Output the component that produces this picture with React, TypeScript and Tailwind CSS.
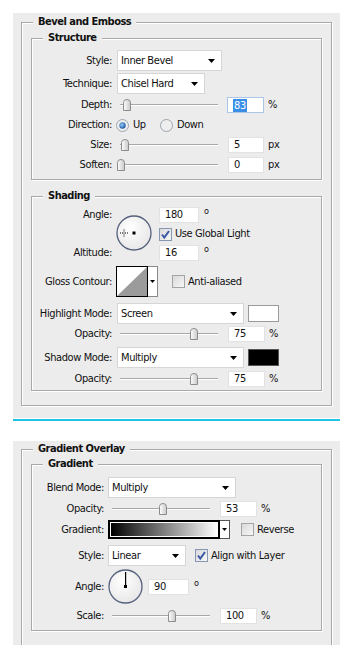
import React from "react";

const FS = "border border-[#a9a9a9] shadow-[1px_1px_0_#ffffff,inset_1px_1px_0_#ffffff] m-0 min-w-0";

function Legend({ children, ml }: { children: React.ReactNode; ml: string }) {
  return <legend className={`${ml} px-[5px] font-bold leading-[14px] tracking-[-0.5px] bg-[#ececec]`}>{children}</legend>;
}

function Arrow() {
  return (
    <svg width="7" height="4" viewBox="0 0 7 4" className="block">
      <path d="M0 0H7L3.5 4Z" fill="#000" />
    </svg>
  );
}

function Select({ w, text }: { w: string; text: string }) {
  return (
    <div className={`${w} h-[21px] bg-white border border-[#d6d6d6] flex items-center pl-[3px] pr-[6px]`}>
      <span className="flex-1">{text}</span>
      <Arrow />
    </div>
  );
}

function Thumb() {
  return (
    <svg width="8" height="12" viewBox="0 0 8 12" className="block">
      <defs>
        <linearGradient id="tg" x1="0" y1="0" x2="1" y2="0">
          <stop offset="0" stopColor="#ffffff" />
          <stop offset="1" stopColor="#c8c8c8" />
        </linearGradient>
      </defs>
      <path d="M0.5 3.5Q0.5 0.5 4 0.5Q7.5 0.5 7.5 3.5V11.5H0.5Z" fill="url(#tg)" stroke="#8c8c8c" />
    </svg>
  );
}

function Slider({ w, pos }: { w: string; pos: number }) {
  return (
    <div className={`${w} h-[14px] relative`}>
      <div className="absolute left-0 right-0 top-[6px] h-[2px] border-t border-[#a8a8a8] border-b border-b-white" />
      <div className="absolute top-[1px]" style={{ left: pos }}>
        <Thumb />
      </div>
    </div>
  );
}

function Input({ w, value, focus }: { w: string; value: string; focus?: boolean }) {
  return (
    <div
      className={`${w} h-[16px] bg-white border ${focus ? "border-[#a9c6e6]" : "border-[#e2e2e2]"} flex items-center pl-[5px]`}
    >
      {focus ? <span className="bg-[#3a8ee6] text-white px-[1px] leading-[13px]">{value}</span> : <span>{value}</span>}
    </div>
  );
}

function Check({ checked }: { checked?: boolean }) {
  return (
    <svg width="13" height="13" viewBox="0 0 13 13" className="block">
      <defs>
        <linearGradient id="cg" x1="0" y1="0" x2="1" y2="1">
          <stop offset="0" stopColor="#d8d8d8" />
          <stop offset="1" stopColor="#f8f8f8" />
        </linearGradient>
      </defs>
      <rect x="0.5" y="0.5" width="12" height="12" fill="url(#cg)" stroke={checked ? "#8797b3" : "#a4a4a4"} />
      {checked && <path d="M3 6.5L5.3 9.5L10 3" fill="none" stroke="#3a57a6" strokeWidth="2" />}
    </svg>
  );
}

function Radio({ on }: { on?: boolean }) {
  return (
    <svg width="13" height="13" viewBox="0 0 13 13" className="block">
      <defs>
        <radialGradient id="rg" cx="0.4" cy="0.4" r="0.6">
          <stop offset="0" stopColor="#9ccbf5" />
          <stop offset="1" stopColor="#1b59a8" />
        </radialGradient>
      </defs>
      <circle cx="6.5" cy="6.5" r="6" fill="#eeeeee" stroke="#9ba3ad" />
      {on && <circle cx="6.5" cy="6.5" r="3.2" fill="url(#rg)" />}
    </svg>
  );
}

function Row({ lw, label, children, h = "h-[20px]", cls = "" }: { lw: string; label: string; children?: React.ReactNode; h?: string; cls?: string }) {
  return (
    <div className={`flex items-center ${h} ${cls}`}>
      <div className={`${lw} text-right shrink-0`}>{label}</div>
      {children}
    </div>
  );
}

function Dial({ size, mode }: { size: number; mode: "light" | "up" }) {
  const c = size / 2;
  return (
    <svg width={size} height={size} viewBox={`0 0 ${size} ${size}`} className="block">
      <defs>
        <radialGradient id={`dg${mode}`} cx="0.4" cy="0.35" r="0.7">
          <stop offset="0" stopColor="#ffffff" />
          <stop offset="1" stopColor="#e6e6e6" />
        </radialGradient>
      </defs>
      <circle cx={c} cy={c} r={c - 1} fill={`url(#dg${mode})`} stroke="#56617e" strokeWidth="1.3" />
      <rect x={c - 1.5} y={c - 1.5} width="3" height="3" fill="#000" />
      {mode === "light" && (
        <g fill="#000">
          <rect x="4" y={c - 0.5} width="1" height="1" />
          <rect x="6" y={c - 0.5} width="1" height="1" />
          <rect x="9" y={c - 0.5} width="1" height="1" />
          <rect x="11" y={c - 0.5} width="1" height="1" />
          <rect x="7.5" y={c - 3.5} width="1" height="1" />
          <rect x="7.5" y={c - 1.5} width="1" height="1" />
          <rect x="7.5" y={c + 0.5} width="1" height="1" />
          <rect x="7.5" y={c + 2.5} width="1" height="1" />
        </g>
      )}
      {mode === "up" && <rect x={c - 0.5} y="3" width="1.2" height={c - 3} fill="#000" />}
    </svg>
  );
}

export default function App() {
  return (
    <div className="w-[353px] h-[658px] bg-white overflow-hidden text-[11px] leading-[14px] tracking-[-0.4px] text-[#111] font-['DejaVu_Sans_Condensed','DejaVu_Sans',sans-serif]">
      <div className="h-[13px]" />
      {/* Bevel and Emboss panel */}
      <div className="ml-[13px] w-[327px] h-[405px] bg-[#ececec] px-[8px] pt-[2px]">
        <fieldset className={`${FS} h-[391px] px-[9px]`}>
          <Legend ml="ml-[2px]">Bevel and Emboss</Legend>
          <div className="pt-[2px]">
            <fieldset className={`${FS} h-[149px] px-0`}>
              <Legend ml="ml-[11px]">Structure</Legend>
              <div className="pt-[5px]">
                <Row lw="w-[80px]" label="Style:" h="h-[21px]">
                  <div className="ml-[5px]">
                    <Select w="w-[105px]" text="Inner Bevel" />
                  </div>
                </Row>
                <Row lw="w-[80px]" label="Technique:" h="h-[21px]" cls="mt-[2px]">
                  <div className="ml-[5px]">
                    <Select w="w-[88px]" text="Chisel Hard" />
                  </div>
                </Row>
                <Row lw="w-[80px]" label="Depth:" cls="mt-[1px]">
                  <div className="ml-[8px]">
                    <Slider w="w-[98px]" pos={3} />
                  </div>
                  <div className="ml-[9px]">
                    <Input w="w-[37px]" value="83" focus />
                  </div>
                  <span className="ml-[4px]">%</span>
                </Row>
                <Row lw="w-[80px]" label="Direction:">
                  <div className="ml-[4px] w-[44px] flex items-center">
                    <Radio on />
                    <span className="ml-[4px]">Up</span>
                  </div>
                  <Radio />
                  <span className="ml-[4px]">Down</span>
                </Row>
                <Row lw="w-[80px]" label="Size:">
                  <div className="ml-[8px]">
                    <Slider w="w-[98px]" pos={1} />
                  </div>
                  <div className="ml-[10px]">
                    <Input w="w-[36px]" value="5" />
                  </div>
                  <span className="ml-[4px]">px</span>
                </Row>
                <Row lw="w-[80px]" label="Soften:">
                  <div className="ml-[5px]">
                    <Slider w="w-[101px]" pos={0} />
                  </div>
                  <div className="ml-[10px]">
                    <Input w="w-[36px]" value="0" />
                  </div>
                  <span className="ml-[4px]">px</span>
                </Row>
              </div>
            </fieldset>
            <fieldset className={`${FS} h-[202px] px-0 mt-[9px]`}>
              <Legend ml="ml-[11px]">Shading</Legend>
              <div className="pt-[4px]">
                <div className="flex">
                  <div className="w-[80px] h-[53px] flex flex-col justify-between text-right">
                    <div className="h-[15px] leading-[15px]">Angle:</div>
                    <div className="h-[15px] leading-[15px]">Altitude:</div>
                  </div>
                  <div className="ml-[4px] mt-[8px]">
                    <Dial size={36} mode="light" />
                  </div>
                  <div className="ml-[7px] flex flex-col">
                    <div className="flex items-start">
                      <Input w="w-[40px]" value="180" />
                      <span className="ml-[5px] text-[9px] leading-[9px]">o</span>
                    </div>
                    <div className="flex items-center mt-[3px] h-[16px]">
                      <Check checked />
                      <span className="ml-[3px]">Use Global Light</span>
                    </div>
                    <div className="flex items-start mt-[3px]">
                      <Input w="w-[40px]" value="16" />
                      <span className="ml-[5px] text-[9px] leading-[9px]">o</span>
                    </div>
                  </div>
                </div>
                <Row lw="w-[80px]" label="Gloss Contour:" h="h-[31px]" cls="mt-[5px]">
                  <div className="ml-[4px] flex h-[31px]">
                    <div className="w-[32px] h-[31px] border border-black bg-white">
                      <svg width="30" height="29" viewBox="0 0 30 29" className="block">
                        <path d="M0 29L30 0V29Z" fill="#9b9b9b" />
                      </svg>
                    </div>
                    <div className="w-[10px] h-[31px] border border-l-0 border-[#8a8a8a] bg-white flex items-center justify-center">
                      <svg width="5" height="3" viewBox="0 0 5 3" className="block">
                        <path d="M0 0H5L2.5 3Z" fill="#000" />
                      </svg>
                    </div>
                  </div>
                  <div className="ml-[14px]">
                    <Check />
                  </div>
                  <span className="ml-[3px]">Anti-aliased</span>
                </Row>
                <Row lw="w-[80px]" label="Highlight Mode:" h="h-[21px]" cls="mt-[6px]">
                  <div className="ml-[5px]">
                    <Select w="w-[127px]" text="Screen" />
                  </div>
                  <div className="ml-[4px] w-[31px] h-[17px] bg-white border border-[#9a9a9a]" />
                </Row>
                <Row lw="w-[80px]" label="Opacity:">
                  <div className="ml-[8px]">
                    <Slider w="w-[98px]" pos={70} />
                  </div>
                  <div className="ml-[10px]">
                    <Input w="w-[37px]" value="75" />
                  </div>
                  <span className="ml-[4px]">%</span>
                </Row>
                <Row lw="w-[80px]" label="Shadow Mode:" h="h-[21px]" cls="mt-[3px]">
                  <div className="ml-[5px]">
                    <Select w="w-[127px]" text="Multiply" />
                  </div>
                  <div className="ml-[4px] w-[31px] h-[17px] bg-black border border-[#555]" />
                </Row>
                <Row lw="w-[80px]" label="Opacity:" cls="mt-[1px]">
                  <div className="ml-[8px]">
                    <Slider w="w-[98px]" pos={70} />
                  </div>
                  <div className="ml-[10px]">
                    <Input w="w-[37px]" value="75" />
                  </div>
                  <span className="ml-[4px]">%</span>
                </Row>
              </div>
            </fieldset>
          </div>
        </fieldset>
      </div>
      <div className="ml-[13px] w-[327px] h-[2px] mt-[1px] bg-[#22c3e3]" />
      <div className="h-[20px]" />
      {/* Gradient Overlay panel */}
      <div className="ml-[13px] w-[327px] h-[204px] bg-[#ececec] px-[8px] pt-[1px] overflow-hidden">
        <fieldset className={`${FS} h-[240px] px-[9px]`}>
          <Legend ml="ml-[2px]">Gradient Overlay</Legend>
          <div className="pt-[1px]">
            <fieldset className={`${FS} h-[174px] px-0`}>
              <Legend ml="ml-[11px]">Gradient</Legend>
              <div className="pt-[6px]">
                <Row lw="w-[72px]" label="Blend Mode:" h="h-[21px]">
                  <div className="ml-[4px]">
                    <Select w="w-[128px]" text="Multiply" />
                  </div>
                </Row>
                <Row lw="w-[72px]" label="Opacity:" cls="mt-[1px]">
                  <div className="ml-[8px]">
                    <Slider w="w-[98px]" pos={47} />
                  </div>
                  <div className="ml-[10px]">
                    <Input w="w-[37px]" value="53" />
                  </div>
                  <span className="ml-[4px]">%</span>
                </Row>
                <Row lw="w-[72px]" label="Gradient:" h="h-[19px]" cls="mt-[1px]">
                  <div className="ml-[4px] flex h-[19px]">
                    <div className="w-[112px] h-[19px] border-2 border-black p-[1px] bg-white">
                      <div className="w-full h-full bg-[linear-gradient(to_right,#000,#fff)]" />
                    </div>
                    <div className="w-[10px] h-[19px] border border-l-0 border-[#555] bg-white flex items-center justify-center">
                      <svg width="5" height="3" viewBox="0 0 5 3" className="block">
                        <path d="M0 0H5L2.5 3Z" fill="#000" />
                      </svg>
                    </div>
                  </div>
                  <div className="ml-[11px]">
                    <Check />
                  </div>
                  <span className="ml-[3px]">Reverse</span>
                </Row>
                <Row lw="w-[72px]" label="Style:" h="h-[21px]" cls="mt-[6px]">
                  <div className="ml-[4px]">
                    <Select w="w-[78px]" text="Linear" />
                  </div>
                  <div className="ml-[9px]">
                    <Check checked />
                  </div>
                  <span className="ml-[3px]">Align with Layer</span>
                </Row>
                <Row lw="w-[72px]" label="Angle:" h="h-[35px]" cls="mt-[3px]">
                  <div className="ml-[4px]">
                    <Dial size={35} mode="up" />
                  </div>
                  <div className="ml-[5px] flex items-start">
                    <Input w="w-[41px]" value="90" />
                    <span className="ml-[5px] text-[9px] leading-[9px]">o</span>
                  </div>
                </Row>
                <Row lw="w-[72px]" label="Scale:" cls="mt-[2px]">
                  <div className="ml-[8px]">
                    <Slider w="w-[98px]" pos={56} />
                  </div>
                  <div className="ml-[10px]">
                    <Input w="w-[37px]" value="100" />
                  </div>
                  <span className="ml-[4px]">%</span>
                </Row>
              </div>
            </fieldset>
          </div>
        </fieldset>
      </div>
    </div>
  );
}
